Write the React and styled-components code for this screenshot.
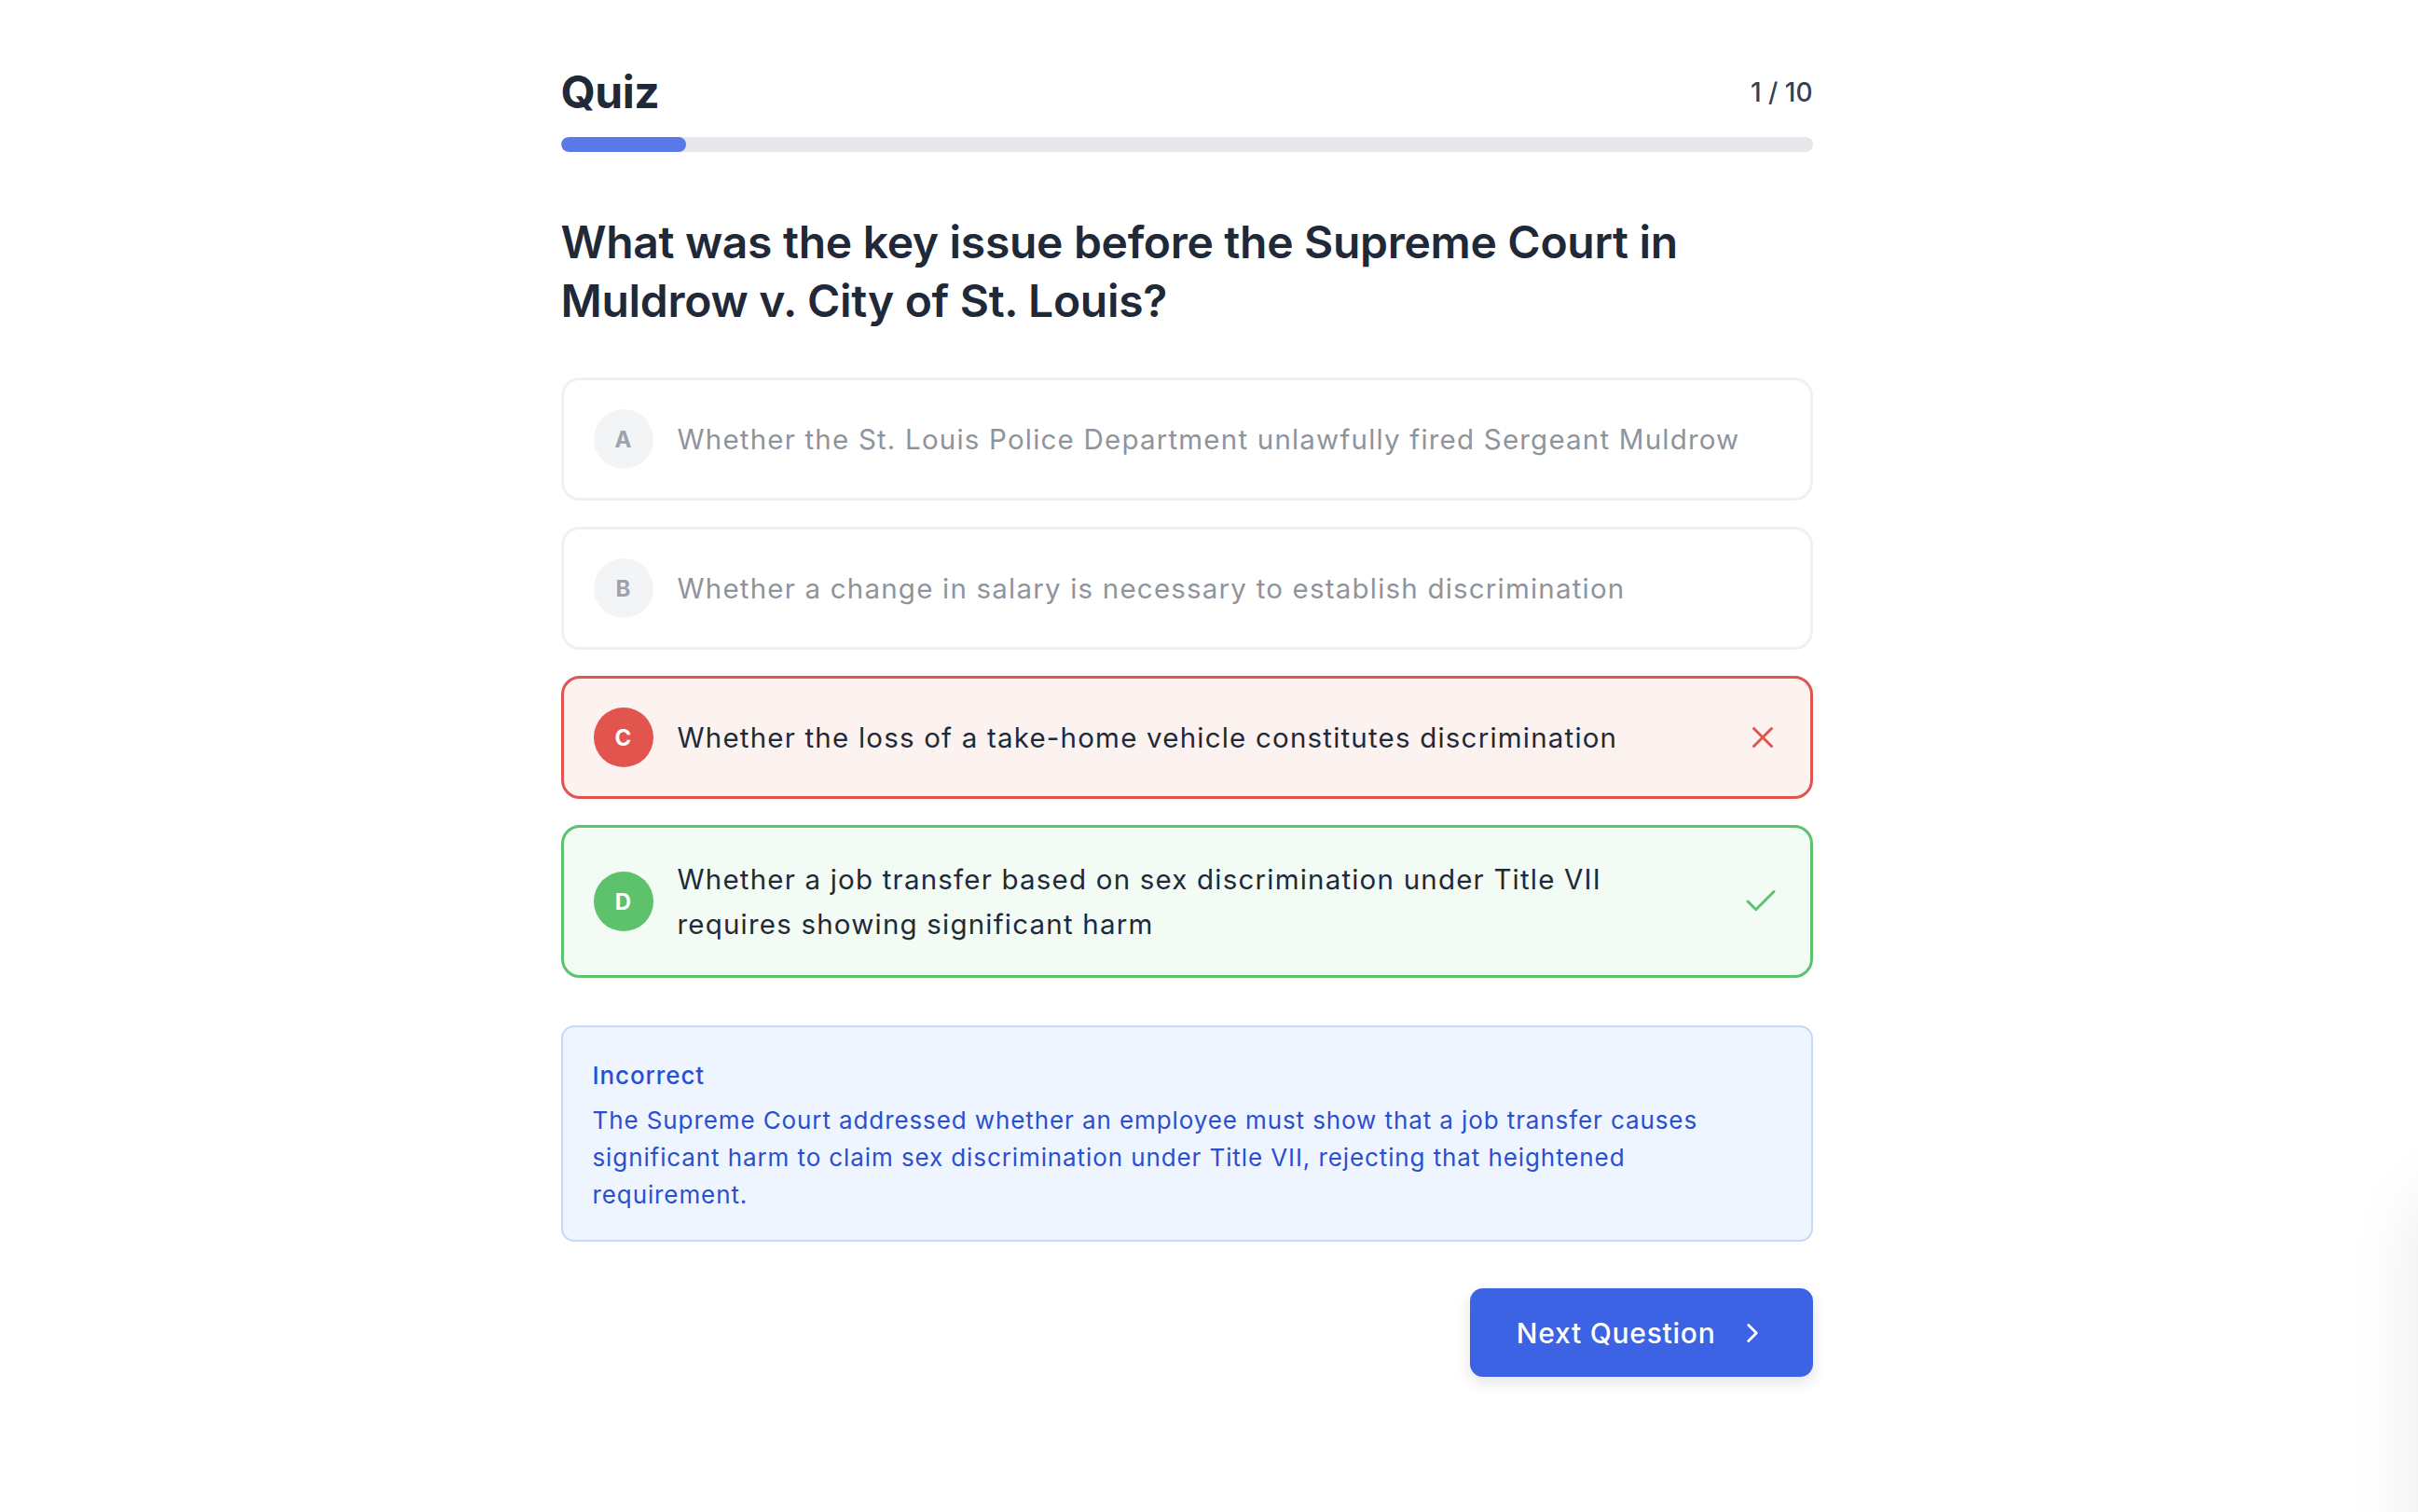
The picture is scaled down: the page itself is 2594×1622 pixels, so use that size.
import React from "react";
import styled, { createGlobalStyle, css } from "styled-components";
import { ChevronRight, X, Check } from "lucide-react";

const GlobalStyle = createGlobalStyle`
  html, body {
    margin: 0;
    padding: 0;
    background: #ffffff;
  }
  body {
    font-family: Inter, "Noto Sans", sans-serif;
    color: #1f2937;
    -webkit-font-smoothing: antialiased;
  }
`;

const Page = styled.main`
  min-height: 1622px;
  box-sizing: border-box;
  padding: 70px 48px 0 0;
  display: flex;
  justify-content: center;
`;

const Quiz = styled.section`
  width: 1343px;
  display: flex;
  flex-direction: column;
`;

const Header = styled.header`
  display: flex;
  align-items: center;
  justify-content: space-between;
`;

const Title = styled.h1`
  margin: 0;
  font-size: 48px;
  line-height: 58px;
  font-weight: 700;
  letter-spacing: -0.5px;
  color: #1f2937;
`;

const Counter = styled.span`
  font-size: 28px;
  font-weight: 500;
  color: #374151;
`;

const Track = styled.div`
  margin-top: 19px;
  height: 16px;
  border-radius: 999px;
  background: #e5e7eb;
  overflow: hidden;
`;

const Fill = styled.div`
  height: 100%;
  border-radius: 999px;
  background: #5a78e6;
`;

const Question = styled.h2`
  margin: 65px 0 0;
  font-size: 48px;
  line-height: 63px;
  font-weight: 600;
  letter-spacing: -0.3px;
  color: #1f2937;
`;

const Options = styled.div`
  margin-top: 51px;
  display: flex;
  flex-direction: column;
  gap: 28px;
`;

const tones = {
  muted: css`
    border-color: #eff0f2;
    background: #ffffff;
    color: #8f949c;
  `,
  wrong: css`
    border-color: #e2544e;
    background: #fcf3f1;
    color: #1f2937;
  `,
  right: css`
    border-color: #5cc26b;
    background: #f2fbf4;
    color: #1f2937;
  `,
};

const badgeTones = {
  muted: css`
    background: #f3f4f6;
    color: #9ca3af;
  `,
  wrong: css`
    background: #e2544e;
    color: #ffffff;
  `,
  right: css`
    background: #5cc26b;
    color: #ffffff;
  `,
};

const Option = styled.div`
  display: flex;
  align-items: center;
  gap: 26px;
  padding: 31px 32px;
  border: 3px solid;
  border-radius: 20px;
  ${(p) => tones[p.$tone]}
`;

const Badge = styled.span`
  width: 64px;
  height: 64px;
  flex: none;
  border-radius: 50%;
  display: flex;
  align-items: center;
  justify-content: center;
  font-size: 24px;
  font-weight: 700;
  ${(p) => badgeTones[p.$tone]}
`;

const OptionText = styled.span`
  flex: 1;
  font-size: 29.5px;
  line-height: 48px;
  letter-spacing: 1.2px;
  padding-right: 20px;
`;

const Mark = styled.span`
  flex: none;
  display: flex;
  color: ${(p) => (p.$tone === "wrong" ? "#e2544e" : "#5cc26b")};
`;

const Feedback = styled.div`
  margin-top: 51px;
  padding: 32px 32px 28px;
  border: 2px solid #c9d8f6;
  border-radius: 14px;
  background: #eff5fe;
  color: #2a4fd0;
`;

const FeedbackTitle = styled.div`
  font-size: 26px;
  line-height: 40px;
  font-weight: 500;
  letter-spacing: 0.9px;
  margin-bottom: 8px;
`;

const FeedbackText = styled.p`
  margin: 0;
  font-size: 26px;
  line-height: 40px;
  letter-spacing: 0.9px;
`;

const Footer = styled.div`
  margin-top: 50px;
  display: flex;
  justify-content: flex-end;
`;

const NextButton = styled.button`
  height: 95px;
  padding: 0 48px 0 50px;
  display: flex;
  align-items: center;
  gap: 22px;
  border: none;
  border-radius: 14px;
  background: #3b63e3;
  color: #ffffff;
  font-family: inherit;
  font-size: 30px;
  font-weight: 500;
  letter-spacing: 0.75px;
  box-shadow: 0 6px 16px rgba(17, 24, 39, 0.12);
  cursor: pointer;
`;

const EdgeShade = styled.div`
  position: fixed;
  top: 1280px;
  right: -320px;
  width: 320px;
  height: 600px;
  border-radius: 40px;
  background: #ffffff;
  box-shadow: 0 0 80px rgba(17, 24, 39, 0.09);
`;

const options = [
  { key: "A", text: "Whether the St. Louis Police Department unlawfully fired Sergeant Muldrow", tone: "muted" },
  { key: "B", text: "Whether a change in salary is necessary to establish discrimination", tone: "muted" },
  { key: "C", text: "Whether the loss of a take-home vehicle constitutes discrimination", tone: "wrong" },
  { key: "D", text: "Whether a job transfer based on sex discrimination under Title VII requires showing significant harm", tone: "right" },
];

export default function App() {
  const current = 1;
  const total = 10;
  return (
    <>
      <GlobalStyle />
      <Page>
        <Quiz>
          <Header>
            <Title>Quiz</Title>
            <Counter>
              {current} / {total}
            </Counter>
          </Header>
          <Track>
            <Fill style={{ width: `${(current / total) * 100}%` }} />
          </Track>

          <Question>
            What was the key issue before the Supreme Court in Muldrow v. City of St. Louis?
          </Question>

          <Options>
            {options.map((o) => (
              <Option key={o.key} $tone={o.tone}>
                <Badge $tone={o.tone}>{o.key}</Badge>
                <OptionText>{o.text}</OptionText>
                {o.tone === "wrong" && (
                  <Mark $tone="wrong">
                    <X size={38} strokeWidth={1.9} />
                  </Mark>
                )}
                {o.tone === "right" && (
                  <Mark $tone="right">
                    <Check size={42} strokeWidth={1.7} />
                  </Mark>
                )}
              </Option>
            ))}
          </Options>

          <Feedback>
            <FeedbackTitle>Incorrect</FeedbackTitle>
            <FeedbackText>
              The Supreme Court addressed whether an employee must show that a job transfer causes
              significant harm to claim sex discrimination under Title VII, rejecting that heightened
              requirement.
            </FeedbackText>
          </Feedback>

          <Footer>
            <NextButton>
              Next Question
              <ChevronRight size={34} strokeWidth={2} />
            </NextButton>
          </Footer>
        </Quiz>
      </Page>
      <EdgeShade />
    </>
  );
}
